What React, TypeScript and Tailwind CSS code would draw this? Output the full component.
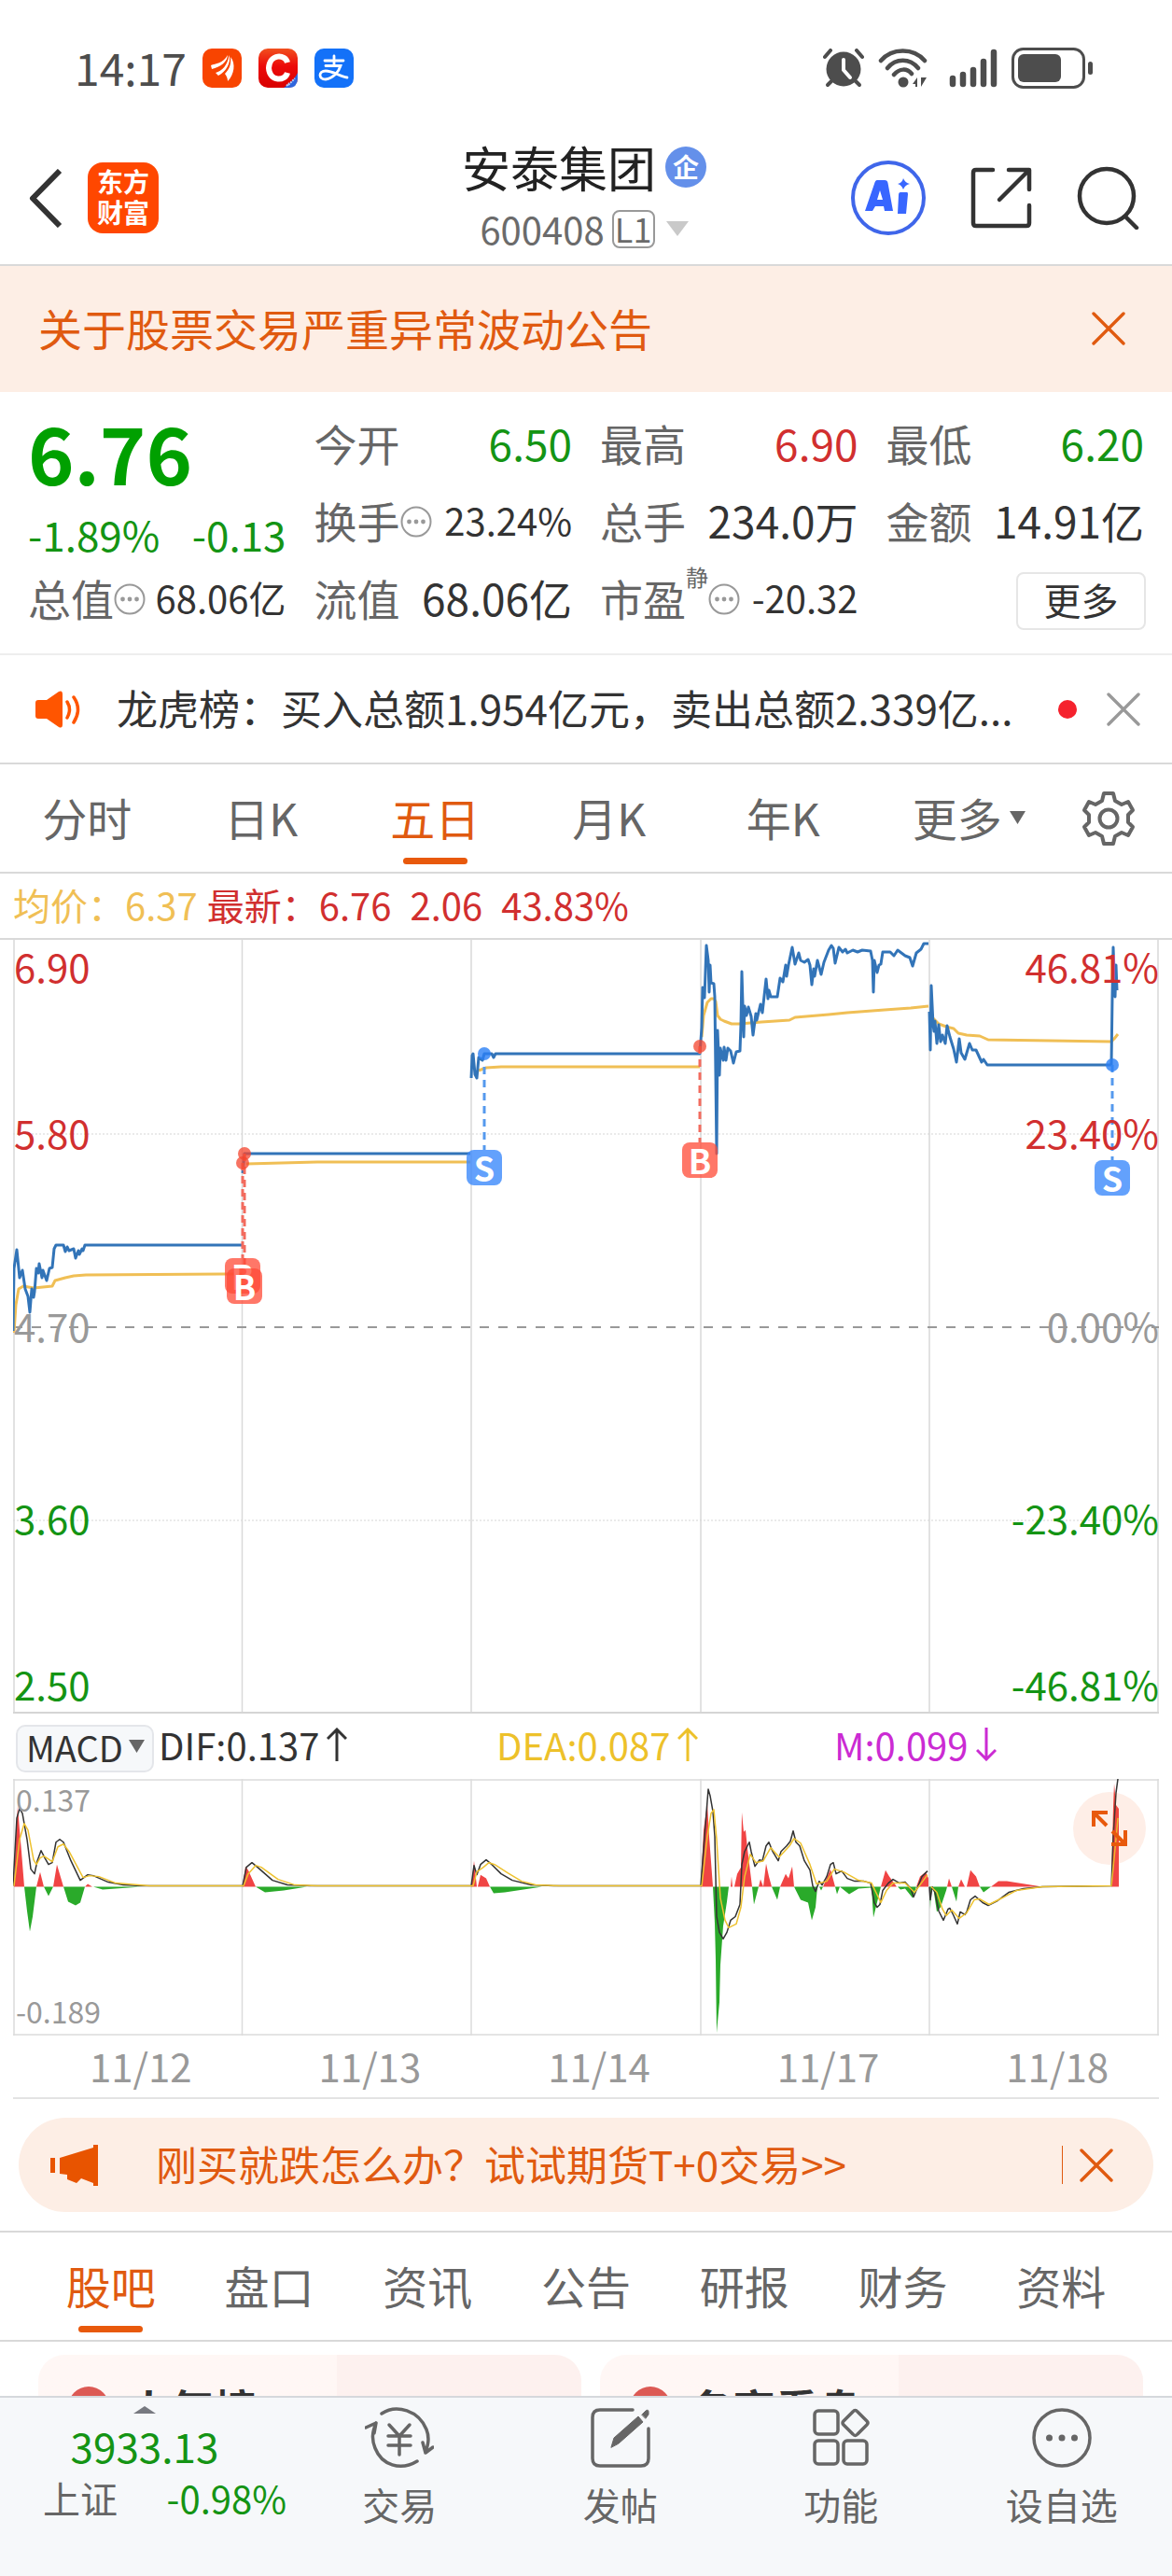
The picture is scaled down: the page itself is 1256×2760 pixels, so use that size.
import { ReactNode } from "react";

interface StatProps {
  label: string;
  sup?: string;
  value: string;
  info?: boolean;
  small?: boolean;
  color?: string;
}

interface MarkerProps {
  type: "B" | "S";
  x: number;
  top: number;
}

const stats: StatProps[] = [
  { label: "今开", value: "6.50", color: "text-[#149414]" },
  { label: "最高", value: "6.90", color: "text-[#d12f2f]" },
  { label: "最低", value: "6.20", color: "text-[#149414]" },
  { label: "换手", value: "23.24%", info: true, small: true },
  { label: "总手", value: "234.0万" },
  { label: "金额", value: "14.91亿" },
  { label: "总值", value: "68.06亿", info: true, small: true },
  { label: "流值", value: "68.06亿" },
  { label: "市盈", sup: "静", value: "-20.32", info: true, small: true },
];

const periods = ["分时", "日K", "五日", "月K", "年K", "更多"];
const sections = ["股吧", "盘口", "资讯", "公告", "研报", "财务", "资料"];
const dates = ["11/12", "11/13", "11/14", "11/17", "11/18"];

const axis = [
  { price: "6.90", pct: "46.81%", pos: "top-[3px]", color: "text-[#d12f2f]" },
  { price: "5.80", pct: "23.40%", pos: "top-[181px]", color: "text-[#d12f2f]" },
  { price: "4.70", pct: "0.00%", pos: "top-[388px]", color: "text-[#999999]" },
  { price: "3.60", pct: "-23.40%", pos: "top-[594px]", color: "text-[#149414]" },
  { price: "2.50", pct: "-46.81%", pos: "top-[772px]", color: "text-[#149414]" },
];

const markers: MarkerProps[] = [
  { type: "B", x: 246, top: 341 },
  { type: "B", x: 248, top: 352 },
  { type: "S", x: 505, top: 225 },
  { type: "B", x: 736, top: 217 },
  { type: "S", x: 1178, top: 236 },
];

const priceLines = [
  "0,419 1,352 4,332 7,362 10,354 13,374 16,382 18,399 20,374 22,383 23,377 25,352 27,357 28,347 31,362 32,354 36,365 39,352 42,351 44,331 46,327 54,327 56,334 58,329 60,333 65,331 67,341 70,333 71,337 74,331 75,333 77,327 245,327",
  "246,250 247,239 248,229 490,229",
  "491,148 492,124 493,122 495,144 497,148 499,126 503,129 505,122 513,122 515,126 517,122 736,122 738,94 739,51 741,62 743,6 745,22 746,56 747,27 748,46 751,47 752,61 753,144 754,229 755,97 757,145 758,116 761,129 762,115 764,129 766,116 769,119 772,132 775,120 779,119 780,91 781,34 783,104 784,71 786,81 788,72 791,82 793,102 796,79 797,86 801,69 803,78 807,42 809,63 810,54 812,61 819,61 822,41 825,45 828,27 829,39 831,27 835,8 838,26 842,14 844,22 848,24 852,21 854,27 856,48 858,31 859,39 862,22 866,37 869,24 874,11 877,6 879,9 881,25 885,8 889,13 892,10 894,14 900,11 905,13 910,11 919,12 921,22 922,56 923,22 926,35 928,27 930,26 932,13 940,13 944,17 948,11 956,17 961,19 964,28 968,14 973,10 976,4 981,4",
  "982,77 983,118 984,49 986,91 987,98 988,87 990,111 992,91 994,109 996,102 999,111 1001,92 1004,104 1008,117 1011,131 1014,106 1016,121 1020,128 1025,111 1028,118 1032,118 1038,131 1040,128 1044,134 1177,134 1178,61 1179,8 1181,61 1182,27 1183,54",
];

const averageLines = [
  "1,421 3,391 6,374 11,371 22,373 42,371 45,365 56,362 65,360 78,359 226,358 245,358",
  "250,240 326,238 490,238",
  "499,140 507,137 523,136 736,136",
  "738,104 740,81 744,67 748,63 751,63 753,66 755,81 758,85 762,87 770,90 778,90 802,88 832,86 838,83 874,80 894,78 934,75 962,73 981,71",
  "986,84 992,90 1000,93 1008,95 1013,100 1022,102 1036,103 1045,107 1177,109 1180,106 1184,101",
];

const redBars =
  "M1 116L3 62L5 29L7 55L9 78L12 116Z M25 116L29 100L33 116Z M43 116L47 92L54 116Z M77 116L80 113L85 116Z M246 116L249 94L252 98L260 116Z M491 116L494 88L497 116Z M498 116L501 103L507 107L511 116Z M737 116L740 55L744 26L746 62L750 116Z M769 116L770 105L771 116Z M773 116L776 102L780 95L781 36L783 57L785 55L787 75L792 116Z M799 116L801 108L804 116L807 91L810 105L813 116Z M822 116L828 102L831 107L835 94L837 116Z M868 116L876 97L881 116Z M930 116L935 98L939 105L947 116Z M968 116L972 105L978 100L981 107V116Z M1001 116L1003 107L1006 116Z M1013 116L1016 108L1020 116Z M1022 116L1026 98L1032 105L1036 116Z M1048 116L1056 110L1065 110L1103 116Z M1177 116L1179 30L1180 5L1182 28L1185 32V116Z";

const greenBars =
  "M12 116L15 142L18 164L21 148L25 116Z M33 116L38 126L43 116Z M54 116L59 132L67 136L72 133L77 116Z M86 116L96 119L138 116Z M260 116L270 122L290 120L315 116Z M511 116L515 123L527 122L567 116Z M750 116L752 155L753 195L754 273L757 240L758 200L761 158L765 132L767 116Z M792 116L794 135L799 116Z M813 116L819 130L822 116Z M837 116L844 130L852 133L856 152L860 138L862 116Z M864 116L866 120L868 116Z M881 116L883 124L886 116L896 124L906 118L920 117L922 149L930 116Z M948 116L951 119L956 118L964 128L968 116Z M982 116L983 140L984 116Z M986 116L990 143L994 138L1000 120L1001 116Z M1006 116L1011 132L1013 116Z M1036 116L1040 122L1048 116Z";

const difLines = [
  "0,115 4,42 7,32 10,37 15,65 19,97 23,102 26,88 30,77 34,85 38,92 42,90 46,68 50,65 54,68 62,88 72,109 80,103 86,104 102,111 118,114 138,115 246,115 250,95 256,90 262,95 278,109 294,114 318,115 491,115 494,93 497,103 501,92 507,87 513,92 523,102 535,109 555,114 579,115 737,115 741,62 745,11 747,18 750,35 752,62 754,148 757,165 761,172 765,165 769,152 774,148 779,135 781,92 784,78 789,68 791,78 795,94 800,87 803,88 807,72 810,68 814,78 820,88 823,78 829,72 833,67 836,56 839,68 843,72 848,88 854,98 857,115 860,121 864,110 867,114 872,105 876,92 879,90 882,102 888,99 894,107 902,110 912,110 919,112 923,133 926,138 929,135 932,120 938,112 943,108 950,112 956,111 962,118 965,127 970,115 974,105 980,99",
  "982,116 983,130 985,116 988,122 992,142 997,152 1002,140 1004,139 1008,147 1012,156 1015,143 1020,146 1022,143 1026,130 1031,126 1039,133 1045,136 1055,131 1067,122 1083,118 1103,116 1177,115 1179,62 1182,15 1184,0",
];

const deaLines = [
  "1,115 7,65 12,48 16,55 22,87 25,92 29,85 33,83 42,89 48,73 54,70 60,78 75,106 82,104 92,105 110,112 146,115 247,115 252,102 260,93 266,95 284,108 302,114 326,115 493,115 497,100 504,95 510,90 516,92 530,101 545,110 560,114 585,115 738,115 744,62 748,37 751,33 754,65 758,128 763,152 767,160 775,156 780,138 784,105 790,81 796,90 804,88 812,74 821,84 832,72 837,64 844,69 854,92 861,113 872,110 880,97 890,100 906,109 920,112 930,133 936,120 943,112 956,112 966,122 980,103",
  "984,116 990,122 996,140 1000,147 1006,141 1014,150 1022,144 1030,130 1036,129 1046,135 1060,128 1075,120 1103,116 1177,115 1181,75 1184,42",
];

const InfoIcon = () => (
  <svg className="mt-1 size-[34px] shrink-0" viewBox="0 0 34 34" fill="#999">
    <circle cx="17" cy="17" r="15.5" fill="none" stroke="#999" strokeWidth="2" />
    <circle cx="9.5" cy="17" r="2.4" />
    <circle cx="17" cy="17" r="2.4" />
    <circle cx="24.5" cy="17" r="2.4" />
  </svg>
);

const CloseIcon = ({ color }: { color: string }) => (
  <svg className="size-[36px]" viewBox="0 0 36 36" fill="none" stroke={color} strokeWidth="3.4" strokeLinecap="round">
    <path d="M2 2L34 34M34 2L2 34" />
  </svg>
);

const Arrow = ({ down = false }: { down?: boolean }) => (
  <svg className="h-[36px] w-[22px]" viewBox="0 0 22 36" fill="none" stroke="currentColor" strokeWidth="3">
    <path d={down ? "M11 0V34M1 24L11 34L21 24" : "M11 36V2M1 12L11 2L21 12"} />
  </svg>
);

const StatusBar = () => (
  <div className="flex h-[146px] items-center justify-between pr-[84px] pl-[80px]">
    <div className="flex items-center gap-[18px]">
      <span className="-mr-px pb-1 text-[48px] leading-[60px] text-[#4d4d4d]">14:17</span>
      <svg className="size-[42px]" viewBox="0 0 42 42">
        <rect width="42" height="42" rx="10" fill="#f84400" />
        <g fill="#fff">
          <path d="M9 18C14 16 22 16 27 7C27 14 19 20 10 22Z" />
          <path d="M14 26C21 24 27 18 28.500 7C31 15 25 25 17 29Z" />
          <path d="M30 9C36 16 34 28 27 35C27 32 26 30 24 27C29 22 31 16 30 9Z" />
        </g>
      </svg>
      <svg className="size-[42px]" viewBox="0 0 42 42">
        <defs>
          <linearGradient id="cred" x1="0" y1="0" x2="0" y2="1">
            <stop offset="0" stopColor="#f1501f" />
            <stop offset=".45" stopColor="#ec0a0a" />
            <stop offset="1" stopColor="#d80000" />
          </linearGradient>
        </defs>
        <rect width="42" height="42" rx="10" fill="url(#cred)" />
        <path d="M42 26V32Q42 42 32 42H27C33 38 38 34 42 26Z" fill="#2f66dd" />
        <path d="M31 15C29 6 12 5 11 21C12 36 29 35 31 26" fill="none" stroke="#fff" strokeWidth="6" />
        <path d="M32 39L39 32M30 40L33 37" stroke="#b9cdf5" strokeWidth="2" strokeDasharray="2 1" />
      </svg>
      <svg className="size-[42px]" viewBox="0 0 42 42" fill="none" stroke="#fff" strokeLinecap="round">
        <rect width="42" height="42" rx="10" fill="#1371f8" stroke="none" />
        <path d="M11 13H31M21 8V18M12 18.500H28C26 25 20 32 12 33C4 33 4 24 12 24C20 24 27 30 35 31" strokeWidth="2.800" />
      </svg>
    </div>
    <div className="flex items-center text-[#4d4d4d]">
      <svg className="h-[42px] w-[44px]" viewBox="0 0 44 42">
        <path d="M2 9L8 2M36 2L42 9" stroke="currentColor" strokeWidth="4" strokeLinecap="round" />
        <path d="M9 35L5 39M35 35L39 39" stroke="currentColor" strokeWidth="4" strokeLinecap="round" />
        <circle cx="22" cy="22" r="18.500" fill="currentColor" />
        <path d="M22 12V23L29 31" fill="none" stroke="#fff" strokeWidth="4" strokeLinecap="round" strokeLinejoin="round" />
      </svg>
      <svg className="ml-[15px] h-[42px] w-[54px]" viewBox="0 0 54 42" fill="none" stroke="currentColor" strokeWidth="4.500" strokeLinecap="round">
        <path d="M3 13C15-1 38-1 50 13M10 21C19 10 34 10 43 21M17 28C23 21 31 21 36 27" />
        <circle cx="27" cy="36" r="5.500" fill="currentColor" stroke="none" />
        <path d="M42 31V41H40V38H37ZM46 41V31H52L46 41Z" fill="currentColor" stroke="none" />
      </svg>
      <svg className="ml-[22px] h-[42px] w-[52px]" viewBox="0 0 52 42" stroke="currentColor" strokeWidth="6.500" strokeLinecap="round">
        <path d="M4 32V38M15 28V38M26 23V38M37 14V38M48 4V38" />
      </svg>
      <svg className="ml-[15px] h-[44px] w-[88px]" viewBox="0 0 88 44" fill="currentColor">
        <rect x="1.500" y="1.500" width="76" height="41" rx="11" fill="none" stroke="currentColor" strokeWidth="3" />
        <rect x="7" y="7" width="46" height="30" rx="6" />
        <rect x="82" y="15" width="5" height="14" rx="2.500" />
      </svg>
    </div>
  </div>
);

const Header = () => (
  <header className="grid h-[139px] grid-cols-[1fr_auto_1fr] items-center border-b-2 border-[#d9d9d9] pr-[34px] pb-[9px] pl-[30px]">
    <div className="flex items-center gap-[27px]">
      <button aria-label="返回">
        <svg className="h-[63px] w-[37px]" viewBox="0 0 37 63" fill="none" stroke="#333" strokeWidth="6">
          <path d="M34 2L5 31.500L34 61" strokeLinejoin="round" />
        </svg>
      </button>
      <a href="#home" className="grid size-[76px] place-content-center rounded-[16px] bg-[#ff4700] pb-[3px] text-[28px] leading-[33px] font-bold text-white">
        <span>东方</span>
        <span>财富</span>
      </a>
    </div>
    <div className="flex flex-col items-center">
      <h1 className="flex h-[66px] items-center gap-[10px] text-[52px] leading-[66px] text-[#222]">
        安泰集团
        <span className="grid size-[44px] place-content-center rounded-full bg-[#6490ea] pb-[2px] text-[28px] leading-[40px] font-bold text-white">企</span>
      </h1>
      <button className="flex h-[66px] items-center text-[40px] leading-[60px] text-[#6b6b6b]">
        600408
        <span className="ml-2 flex h-[41px] w-[46px] items-center justify-center rounded-lg border-2 border-[#999] pb-[2px] text-[36px]">L1</span>
        <svg className="ml-3 h-[16px] w-[24px]" viewBox="0 0 24 16" fill="#c9c9c9">
          <path d="M0 0H24L12 16Z" />
        </svg>
      </button>
    </div>
    <div className="flex items-center justify-end gap-12">
      <button aria-label="AI">
        <svg className="size-[80px]" viewBox="0 0 80 80">
          <circle cx="40" cy="40" r="38" fill="none" stroke="#3f66ea" strokeWidth="4" />
          <path fillRule="evenodd" fill="#3866ff" d="M28 21H36Q39 21 39.500 24L45 54H36L35 49H26L23 54H15L25 25Q26 21 28 21ZM31 32L28 42H34Z" />
          <path d="M53 34H60Q61 34 61 36L59 57H50L51 37Q51 34 53 34ZM56 19Q58 24 63 25Q58 26 56 31Q54 26 50 25Q55 24 56 19Z" fill="#3866ff" />
        </svg>
      </button>
      <button aria-label="分享">
        <svg className="size-[66px]" viewBox="0 0 66 66" fill="none" stroke="#333" strokeWidth="4.500" strokeLinecap="round" strokeLinejoin="round">
          <path d="M24 3H6Q3 3 3 6V60Q3 63 6 63H60Q63 63 63 60V41M41 3H63V24M62 4L31 35" />
        </svg>
      </button>
      <button aria-label="搜索">
        <svg className="size-[68px]" viewBox="0 0 68 68" fill="none" stroke="#333" strokeWidth="4.500" strokeLinecap="round">
          <circle cx="32" cy="32" r="29" />
          <path d="M52 54L64 66" />
        </svg>
      </button>
    </div>
  </header>
);

const Stat = ({ label, sup, value, info, small, color = "text-[#333]" }: StatProps) => (
  <div className="flex h-[83px] items-center justify-between">
    <dt className="flex items-center text-[46px] leading-[60px] text-[#666]">
      {label}
      {sup && <sup className="-top-[22px] text-[24px] leading-none">{sup}</sup>}
      {info && <InfoIcon />}
    </dt>
    <dd className={`${small ? "text-[40px]" : "text-[46px]"} leading-[60px] ${color}`}>{value}</dd>
  </div>
);

const Quote = () => (
  <section className="relative px-[30px] pt-[12px] pb-[19px]">
    <dl className="grid grid-cols-4 gap-x-[30px]">
      <div className="row-span-2 flex flex-col justify-end text-[#149414]">
        <dt className="mb-3 text-[84px] leading-[100px] font-bold text-[#00a000]">6.76</dt>
        <dd className="flex justify-between text-[44px] leading-[52px]">
          <span>-1.89%</span>
          <span>-0.13</span>
        </dd>
      </div>
      {stats.map((stat) => (
        <Stat key={stat.label} {...stat} />
      ))}
    </dl>
    <button className="absolute right-[28px] bottom-[25px] h-[62px] w-[139px] rounded-lg border-2 border-[#e6e6e6] pb-1 text-[40px] leading-[54px] text-[#333]">
      更多
    </button>
  </section>
);

const News = () => (
  <div className="flex h-[119px] items-center border-t-2 border-b-2 border-t-[#eee] border-b-[#d9d9d9] pr-[34px] pl-[38px]">
    <svg className="h-[40px] w-[50px] shrink-0" viewBox="0 0 50 40" fill="#ff5500">
      <path d="M3 10H12L25 1Q29-1 29 4V36Q29 41 25 39L12 30H3Q0 30 0 27V13Q0 10 3 10Z" />
      <path d="M34 12Q39 20 34 29M41 7Q50 20 41 34" fill="none" stroke="#ff5500" strokeWidth="3.500" strokeLinecap="round" />
    </svg>
    <a href="#news" className="ml-[37px] flex-1 pb-1 text-[44px] leading-[60px] whitespace-nowrap text-[#333]">
      龙虎榜：买入总额1.954亿元，卖出总额2.339亿...
    </a>
    <span className="mr-[32px] size-[20px] rounded-full bg-[#f5222d]" />
    <button aria-label="关闭">
      <CloseIcon color="#999" />
    </button>
  </div>
);

const PeriodTabs = () => (
  <nav className="flex h-[117px] border-b-2 border-[#d9d9d9]">
    {periods.map((name) => (
      <button
        key={name}
        className={`relative flex flex-1 items-center justify-center pb-1 text-[48px] leading-[60px] ${name === "五日" ? "text-[#e05a10]" : "text-[#666]"}`}
      >
        <span className="relative">
          {name}
          {name === "更多" && (
            <svg className="absolute top-[24px] left-full ml-2 h-[14px] w-[17px]" viewBox="0 0 17 14" fill="#666">
              <path d="M0 0H17L8.500 14Z" />
            </svg>
          )}
        </span>
        {name === "五日" && <span className="absolute bottom-[8px] h-[7px] w-[69px] rounded-full bg-[#e8590c]" />}
      </button>
    ))}
    <button aria-label="设置" className="grid w-[137px] place-content-center">
      <svg className="size-[58px]" viewBox="0 0 58 58" fill="none" stroke="#666" strokeWidth="4" strokeLinejoin="round">
        <path d="M24 2H34L36 10L43 14L50 11L55 20L50 25V33L55 38L50 47L43 44L36 48L34 56H24L22 48L15 44L8 47L3 38L8 33V25L3 20L8 11L15 14L22 10Z" />
        <circle cx="29" cy="29" r="9.500" />
      </svg>
    </button>
  </nav>
);

const Marker = ({ type, x, top }: MarkerProps) => (
  <span
    className={`absolute grid size-[38px] -translate-x-1/2 place-content-center rounded-lg pb-[2px] text-[36px] leading-[36px] font-bold text-white ${type === "B" ? "bg-[#ff4a36]/75" : "bg-[#3c8afb]/80"}`}
    style={{ left: `${(x / 1228) * 100}%`, top }}
  >
    {type}
  </span>
);

const Lines = ({ items, color, width }: { items: string[]; color: string; width: number }) => (
  <g fill="none" stroke={color} strokeWidth={width} strokeLinejoin="round">
    {items.map((points) => (
      <polyline key={points} points={points} />
    ))}
  </g>
);

const PriceChart = () => (
  <div className="relative mx-[14px] h-[829px]">
    <svg className="absolute inset-0 size-full" viewBox="0 0 1228 829" preserveAspectRatio="none">
      <path d="M1 0V829M245.500 0V829M491 0V829M737 0V829M982 0V829M1227 0V829" stroke="#d9d9d9" strokeWidth="1.500" />
      <path d="M0 828H1228" stroke="#d5d5d5" strokeWidth="2" />
      <path d="M0 208H1228M0 622H1228" stroke="#d5d5d5" strokeWidth="1" strokeDasharray="2 2" />
      <path d="M0 415H1228" stroke="#999" strokeWidth="2" strokeDasharray="10 10" />
      <Lines items={averageLines} color="#f0bf55" width={3} />
      <Lines items={priceLines} color="#3274b8" width={3} />
      <g fill="none" strokeWidth="3" strokeDasharray="8 6">
        <path d="M246 239V341M248 229V352M736 114V217" stroke="#f26b5e" />
        <path d="M505 136V225M1178 134V236" stroke="#5599ee" />
      </g>
      <g fill="#f4442e" fillOpacity=".75">
        <circle cx="248" cy="229" r="7" />
        <circle cx="246" cy="239" r="7" />
        <circle cx="736" cy="114" r="7" />
      </g>
      <g fill="#2b7ff5" fillOpacity=".8">
        <circle cx="505" cy="122" r="7" />
        <circle cx="1178" cy="134" r="7" />
      </g>
    </svg>
    {axis.map(({ price, pct, pos, color }) => (
      <div key={price} className={`absolute inset-x-0 flex justify-between pl-px text-[42px] leading-[50px] ${pos} ${color}`}>
        <span>{price}</span>
        <span>{pct}</span>
      </div>
    ))}
    {markers.map((marker) => (
      <Marker key={marker.x} {...marker} />
    ))}
  </div>
);

const MacdChart = () => (
  <section>
    <div className="flex h-[70px] items-center pl-[17px] text-[40px] leading-[50px] text-[#333]">
      <div className="relative mr-[5px] h-[51px] w-[148px]">
        <select aria-label="指标" className="size-full appearance-none rounded-[10px] border-2 border-[#e4e6ea] bg-[#f6f8fa] pb-1 pl-[9px] text-[38px] leading-[42px]">
          <option>MACD</option>
        </select>
        <svg className="pointer-events-none absolute top-[18px] right-[10px] h-[14px] w-[17px]" viewBox="0 0 17 14" fill="#666">
          <path d="M0 0H17L8.500 14Z" />
        </svg>
      </div>
      <span className="flex flex-1 items-center gap-2 pb-1">DIF:0.137<Arrow /></span>
      <span className="flex flex-1 items-center gap-2 pb-1 text-[#edc12a]">DEA:0.087<Arrow /></span>
      <span className="flex flex-1 items-center gap-2 pb-1 text-[#cb2bd3]">M:0.099<Arrow down /></span>
    </div>
    <div className="relative mx-[14px] h-[275px] text-[32px] leading-[40px] text-[#999]">
      <svg className="absolute inset-0 size-full" viewBox="0 0 1228 276" preserveAspectRatio="none">
        <path d="M0 1H1228M0 275H1228M1 0V276M245.500 0V276M491 0V276M737 0V276M982 0V276M1227 0V276" stroke="#dcdcdc" strokeWidth="1.500" />
        <path d={redBars} fill="#f04444" />
        <path d={greenBars} fill="#2aaa2a" />
        <Lines items={difLines} color="#333" width={1.5} />
        <Lines items={deaLines} color="#eec22f" width={1.5} />
      </svg>
      <span className="absolute top-px left-[3px]">0.137</span>
      <span className="absolute bottom-[7px] left-[3px]">-0.189</span>
      <button aria-label="全屏" className="absolute top-[14px] right-[14px] grid size-[78px] place-content-center rounded-full bg-[#fa5a14]/10">
        <svg className="size-[38px]" viewBox="0 0 38 38" fill="none" stroke="#e8590c" strokeWidth="4">
          <path d="M2 17V2H17M2 2L16 16M36 21V36H21M36 36L22 22" />
        </svg>
      </button>
    </div>
    <div className="mx-[14px] flex h-[68px] items-center border-b-2 border-[#e3e3e3] pb-[2px] text-[42px] leading-[60px] text-[#999]">
      {dates.map((date) => (
        <span key={date} className="flex-1 pl-[28px] text-center">{date}</span>
      ))}
    </div>
  </section>
);

const Promo = () => (
  <div className="mx-[20px] mt-5 mb-5 flex h-[101px] items-center rounded-full bg-[#fdeee5] pr-[43px] pl-[34px] text-[#e05a10]">
    <svg className="h-[44px] w-[52px]" viewBox="0 0 52 44" fill="#e85400">
      <path d="M0 14H5V30H0ZM10 14L46 3V0H51V44H46V41L33 36L28 41L18 37V32L10 31Z" />
    </svg>
    <a href="#futures" className="ml-[61px] flex-1 pb-1 text-[44px] leading-[60px] whitespace-nowrap">
      刚买就跌怎么办？试试期货T+0交易&gt;&gt;
    </a>
    <span className="mr-[18px] h-[41px] w-px bg-[#e05a10]" />
    <button aria-label="关闭">
      <CloseIcon color="#e05a10" />
    </button>
  </div>
);

const Card = ({ title }: { title: string }) => (
  <a
    href="#card"
    className="flex h-[180px] flex-1 items-start gap-5 rounded-[28px] bg-linear-to-r from-[#fff7f5] from-55% to-[#fdf1ef] to-55% pt-[34px] pl-[32px]"
  >
    <span className="size-[44px] rounded-full bg-[#dc5a54]" />
    <span className="text-[46px] leading-[44px] font-bold text-[#333]">{title}</span>
  </a>
);

const Sections = () => (
  <section>
    <nav className="flex h-[119px] border-t-2 border-b-2 border-[#d9d9d9] px-[34px]">
      {sections.map((name, i) => (
        <button
          key={name}
          className={`relative flex flex-1 items-center justify-center pb-1 text-[48px] leading-[60px] ${i === 0 ? "text-[#e05a10]" : "text-[#666]"}`}
        >
          {name}
          {i === 0 && <span className="absolute bottom-[8px] h-[7px] w-[69px] rounded-full bg-[#e8590c]" />}
        </button>
      ))}
    </nav>
    <div className="flex gap-5 pt-[14px] pr-[31px] pl-[41px]">
      <Card title="人气榜" />
      <Card title="名家看盘" />
    </div>
  </section>
);

const actions: { name: string; icon: ReactNode }[] = [
  {
    name: "交易",
    icon: (
      <>
        <path d="M18 7C34-4 58 4 66 24C70 34 67 42 65 49M65 49L62 38M65 49L73 43M56 58C38 69 18 62 11 44C7 34 8 27 12 17M12 17L1 22M12 17L10 28" />
        <path d="M26 19L37 31L48 19M25 31H49M25 41H49M37 31V51" />
      </>
    ),
  },
  {
    name: "发帖",
    icon: (
      <>
        <path d="M50 3H15Q7 3 7 11V55Q7 63 15 63H59Q67 63 67 55V23" />
        <path d="M27 43L30 33L56 10L61 16L35 39ZM60 8L64 4Q67 2 67 5V8L64 12Z" fill="#666" strokeWidth="1" />
      </>
    ),
  },
  {
    name: "功能",
    icon: (
      <>
        <rect x="9" y="4" width="25" height="25" rx="4" />
        <rect x="9" y="36" width="25" height="25" rx="4" />
        <rect x="40" y="36" width="25" height="25" rx="4" />
        <path d="M50 5Q52.500 2 55 5L65 15Q67 17 65 19L55 29Q52.500 32 50 29L40 19Q38 17 40 15Z" />
      </>
    ),
  },
  {
    name: "设自选",
    icon: (
      <>
        <circle cx="37" cy="33" r="30" />
        <g fill="#666" stroke="none">
          <circle cx="23.500" cy="33" r="3.500" />
          <circle cx="37" cy="33" r="3.500" />
          <circle cx="50.500" cy="33" r="3.500" />
        </g>
      </>
    ),
  },
];

const Footer = () => (
  <footer className="flex h-[193px] shrink-0 border-t-2 border-[#d5d8dc] bg-[#f6f8fa] text-[40px] leading-[56px] text-[#666]">
    <a href="#index" className="flex w-[310px] flex-col items-center pt-[9px]">
      <svg className="h-[8px] w-[24px]" viewBox="0 0 24 8" fill="#777980">
        <path d="M12 0L24 8H0Z" />
      </svg>
      <span className="mt-[6px] text-[44px] leading-[56px] text-[#149414]">3933.13</span>
      <span className="flex w-full justify-between pr-[3px] pl-[46px]">
        上证 <span className="text-[#149414]">-0.98%</span>
      </span>
    </a>
    {actions.map(({ name, icon }) => (
      <button key={name} className="flex flex-1 flex-col items-center pt-[10px]">
        <svg className="h-[66px] w-[74px]" viewBox="0 0 74 66" fill="none" stroke="#666" strokeWidth="3.500" strokeLinecap="round" strokeLinejoin="round">
          {icon}
        </svg>
        <span className="mt-[10px]">{name}</span>
      </button>
    ))}
  </footer>
);

export default function App() {
  return (
    <div className="flex h-screen flex-col bg-white font-['Noto_Sans_CJK_SC',sans-serif]">
      <main className="flex-1 overflow-x-hidden overflow-y-auto [scrollbar-width:none]">
        <StatusBar />
        <Header />
        <div className="flex h-[135px] items-center justify-between bg-[#fdeee5] pr-[50px] pb-[2px] pl-[41px] text-[#e05a10]">
          <a href="#notice" className="pb-[2px] text-[47px] leading-[60px]">关于股票交易严重异常波动公告</a>
          <button aria-label="关闭">
            <CloseIcon color="#e05a10" />
          </button>
        </div>
        <Quote />
        <News />
        <PeriodTabs />
        <p className="flex h-[71px] items-center border-b-2 border-[#d9d9d9] pb-1 pl-[14px] text-[40px] leading-[50px] text-[#d12f2f]">
          <span className="mr-[10px] text-[#f0bf55]">均价：6.37</span>
          <span>最新：6.76</span>
          <span className="ml-5">2.06</span>
          <span className="ml-5">43.83%</span>
        </p>
        <PriceChart />
        <MacdChart />
        <Promo />
        <Sections />
      </main>
      <Footer />
    </div>
  );
}
